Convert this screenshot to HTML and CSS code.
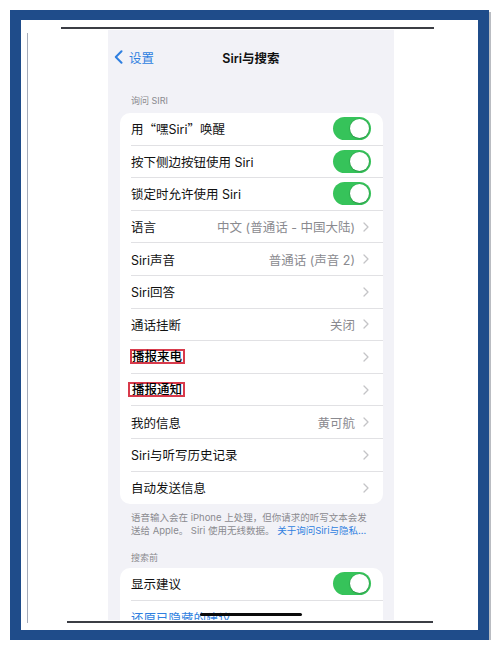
FILE: index.html
```html
<!DOCTYPE html>
<html lang="zh-CN">
<head>
<meta charset="utf-8">
<link rel="stylesheet" href="styles.css">
</head>
<body>
<div class="frame">
  <span class="mark-left"></span>
  <div class="phone">
    <div class="nav">
      <div class="back">
        <svg class="back-icon" width="9" height="14" viewBox="0 0 9 14"><polyline points="7.5,1.2 1.8,7 7.5,12.8" fill="none" stroke="#2f7fe0" stroke-width="2" stroke-linecap="round" stroke-linejoin="round"/></svg>
        <span>设置</span>
      </div>
      <div class="title">Siri与搜索</div>
    </div>

    <div class="sec-head first">询问 SIRI</div>
    <div class="card">
      <div class="row"><div class="cell"><span class="label">用<span class="cjk">“</span>嘿Siri<span class="cjk">”</span>唤醒</span><span class="toggle"></span></div></div>
      <div class="row"><div class="cell"><span class="label">按下侧边按钮使用 Siri</span><span class="toggle"></span></div></div>
      <div class="row"><div class="cell"><span class="label">锁定时允许使用 Siri</span><span class="toggle"></span></div></div>
      <div class="row"><div class="cell link"><span class="label">语言</span><span class="value">中文 (普通话 - 中国大陆)</span><svg class="chev" width="6" height="10" viewBox="0 0 6 10"><polyline points="1,1 5,5 1,9" fill="none" stroke="#c4c4c7" stroke-width="1.3" stroke-linecap="round" stroke-linejoin="round"/></svg></div></div>
      <div class="row"><div class="cell link"><span class="label">Siri声音</span><span class="value">普通话 (声音 2)</span><svg class="chev" width="6" height="10" viewBox="0 0 6 10"><polyline points="1,1 5,5 1,9" fill="none" stroke="#c4c4c7" stroke-width="1.3" stroke-linecap="round" stroke-linejoin="round"/></svg></div></div>
      <div class="row"><div class="cell link"><span class="label">Siri回答</span><span class="value"></span><svg class="chev" width="6" height="10" viewBox="0 0 6 10"><polyline points="1,1 5,5 1,9" fill="none" stroke="#c4c4c7" stroke-width="1.3" stroke-linecap="round" stroke-linejoin="round"/></svg></div></div>
      <div class="row"><div class="cell link"><span class="label">通话挂断</span><span class="value">关闭</span><svg class="chev" width="6" height="10" viewBox="0 0 6 10"><polyline points="1,1 5,5 1,9" fill="none" stroke="#c4c4c7" stroke-width="1.3" stroke-linecap="round" stroke-linejoin="round"/></svg></div></div>
      <div class="row"><div class="cell link"><span class="label"><span class="boxed">播报来电</span></span><span class="value"></span><svg class="chev" width="6" height="10" viewBox="0 0 6 10"><polyline points="1,1 5,5 1,9" fill="none" stroke="#c4c4c7" stroke-width="1.3" stroke-linecap="round" stroke-linejoin="round"/></svg></div></div>
      <div class="row"><div class="cell link"><span class="label"><span class="boxed shifted">播报通知</span></span><span class="value"></span><svg class="chev" width="6" height="10" viewBox="0 0 6 10"><polyline points="1,1 5,5 1,9" fill="none" stroke="#c4c4c7" stroke-width="1.3" stroke-linecap="round" stroke-linejoin="round"/></svg></div></div>
      <div class="row"><div class="cell link"><span class="label">我的信息</span><span class="value">黄可航</span><svg class="chev" width="6" height="10" viewBox="0 0 6 10"><polyline points="1,1 5,5 1,9" fill="none" stroke="#c4c4c7" stroke-width="1.3" stroke-linecap="round" stroke-linejoin="round"/></svg></div></div>
      <div class="row"><div class="cell link"><span class="label">Siri与听写历史记录</span><span class="value"></span><svg class="chev" width="6" height="10" viewBox="0 0 6 10"><polyline points="1,1 5,5 1,9" fill="none" stroke="#c4c4c7" stroke-width="1.3" stroke-linecap="round" stroke-linejoin="round"/></svg></div></div>
      <div class="row"><div class="cell link"><span class="label">自动发送信息</span><span class="value"></span><svg class="chev" width="6" height="10" viewBox="0 0 6 10"><polyline points="1,1 5,5 1,9" fill="none" stroke="#c4c4c7" stroke-width="1.3" stroke-linecap="round" stroke-linejoin="round"/></svg></div></div>
    </div>
    <div class="foot">语音输入会在 iPhone 上处理，但你请求的听写文本会发<br>送给 Apple。 Siri 使用无线数据。 <span class="foot-link">关于询问Siri与隐私…</span></div>

    <div class="sec-head">搜索前</div>
    <div class="card">
      <div class="row"><div class="cell"><span class="label">显示建议</span><span class="toggle"></span></div></div>
      <div class="row"><div class="cell"><span class="label blue">还原已隐藏的建议</span></div></div>
    </div>

    <span class="home-bar"></span>
  </div>
</div>
</body>
</html>
```

FILE: styles.css
```css
html, body {
  margin: 0;
  padding: 0;
  background: #ffffff;
}

body {
  font-family: "Inter", "Noto Sans CJK SC", sans-serif;
  color: #111;
}

.frame {
  position: relative;
  box-sizing: border-box;
  margin: 10px 0 0 10px;
  width: 479px;
  height: 630px;
  border-style: solid;
  border-color: #1f4c8a;
  border-width: 10px 11px 10px 11px;
  padding: 10px 0 0 87px;
  background: #fff;
  box-shadow: 2px 2px 0 #b9bcc2;
}

/* scan marks over the white margin */
.frame::before {
  content: "";
  position: absolute;
  left: 40px;
  top: 7px;
  width: 373px;
  height: 1.5px;
  background: #3b3d44;
}

.frame::after {
  content: "";
  position: absolute;
  left: 46px;
  top: 601px;
  width: 366px;
  height: 1.5px;
  background: #3b3d44;
}

.mark-left {
  position: absolute;
  left: 6px;
  top: 13px;
  width: 1px;
  height: 590px;
  background: #a6acb9;
}

.phone {
  position: relative;
  width: 286px;
  height: 590px;
  background: #f2f2f7;
  overflow: hidden;
}

.nav {
  position: relative;
  height: 26px;
  margin-top: 14px;
  display: flex;
  align-items: center;
  justify-content: center;
}

.back {
  position: absolute;
  left: 6px;
  top: 0;
  height: 26px;
  display: flex;
  align-items: center;
  gap: 6px;
  color: #2f7fe0;
  font-size: 12.5px;
}

.back-icon {
  display: block;
}

.title {
  font-size: 12.5px;
  font-weight: 600;
  color: #111;
}

.sec-head {
  padding: 15px 0 4px 23px;
  font-size: 9px;
  line-height: 12px;
  color: #8a8a8f;
}

.sec-head.first {
  padding-top: 25px;
  padding-bottom: 6px;
}

.card {
  margin: 0 11px 0 12px;
  background: #fff;
  border-radius: 10px;
}

.row {
  height: 32.6px;
  padding-left: 11px;
}

.cell {
  box-sizing: border-box;
  height: 100%;
  display: flex;
  align-items: center;
  padding-right: 12px;
  border-bottom: 0.8px solid #e1e1e4;
}

.row:last-child .cell {
  border-bottom: none;
}

.cell.link {
  padding-right: 14px;
}

.label {
  flex: 1;
  font-size: 12.5px;
  color: #111;
  white-space: nowrap;
}

.cjk {
  font-family: "Noto Sans CJK SC", sans-serif;
}

.label.blue {
  color: #2f7fe0;
}

.value {
  font-size: 12.5px;
  color: #8a8a8f;
  margin-right: 8px;
  white-space: nowrap;
}

.chev {
  display: block;
}

.toggle {
  position: relative;
  width: 38px;
  height: 23px;
  border-radius: 12px;
  background: #36c35a;
}

.toggle::after {
  content: "";
  position: absolute;
  right: 2px;
  top: 2px;
  width: 19px;
  height: 19px;
  border-radius: 50%;
  background: #fff;
  box-shadow: 0 0 0 0.6px rgba(0, 0, 0, 0.12), 0 1px 2px rgba(0, 0, 0, 0.15);
}

.boxed {
  display: inline-block;
  border: 2px solid #d83a4b;
  line-height: 11px;
  padding: 0 1px 0 0;
  margin-left: -1px;
  font-weight: 500;
  color: #000;
}

.boxed.shifted {
  margin-left: -3px;
  padding-left: 2px;
}

.foot {
  padding: 7px 12px 0 23px;
  font-size: 9.5px;
  line-height: 13px;
  color: #8a8a8f;
  white-space: nowrap;
}

.foot-link {
  color: #2f7fe0;
}

.home-bar {
  position: absolute;
  left: 92px;
  bottom: 4px;
  width: 102px;
  height: 3.5px;
  border-radius: 2px;
  background: #0a0a0a;
}
```
